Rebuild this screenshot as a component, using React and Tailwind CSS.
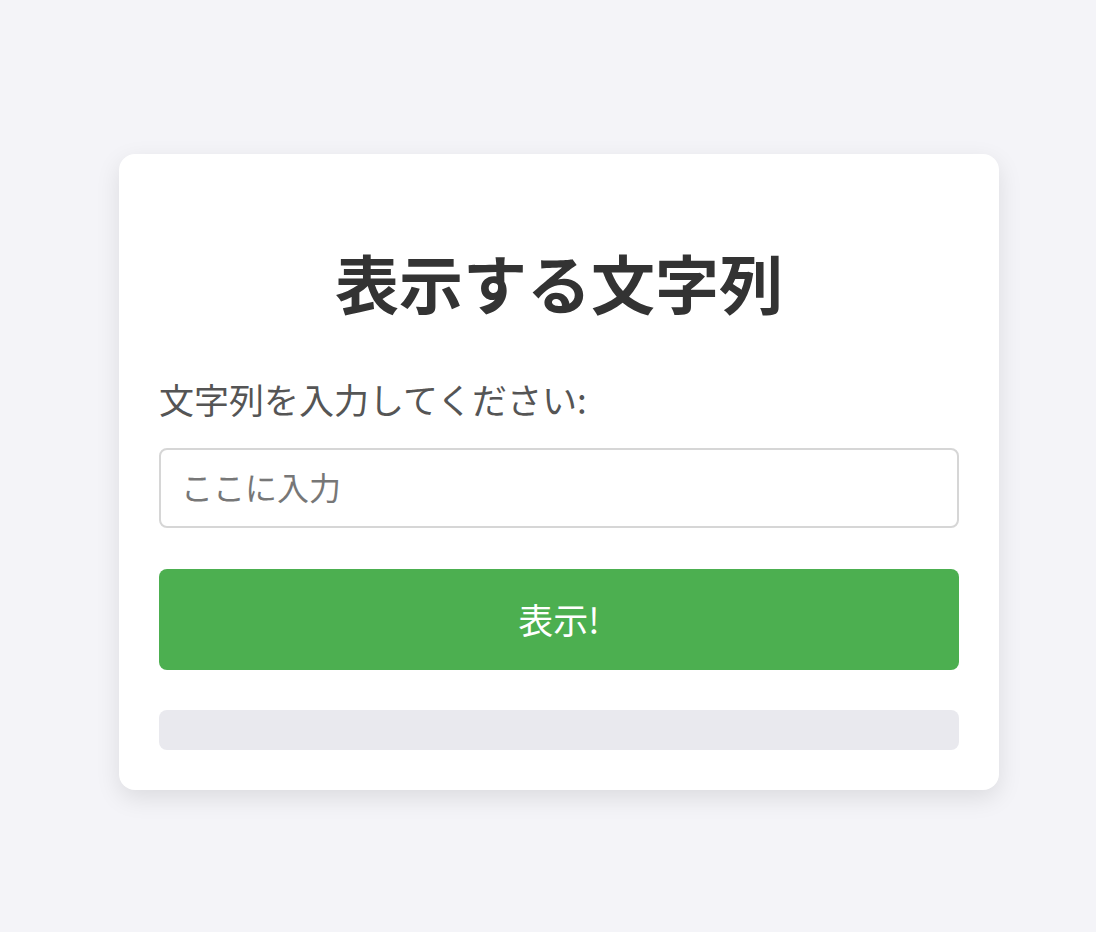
export default function App() {
    return (
        <div
            className="min-h-[932px] w-full bg-[#f4f4f8] pt-[154px] pl-[119px]"
            style={{ fontFamily: '"Noto Sans CJK JP", "Noto Sans", sans-serif' }}
        >
            <div className="w-[880px] rounded-[16px] bg-white px-[40px] pt-[87px] pb-[40px] shadow-[0_8px_24px_rgba(0,0,0,0.1)]">
                <h1 className="text-center text-[64px] font-bold leading-[80px] text-[#333]">表示する文字列</h1>

                <label className="mt-[58px] block text-[35px] leading-[40px] text-[#555]">文字列を入力してください:</label>

                <input
                    type="text"
                    placeholder="ここに入力"
                    className="mt-[29px] block h-[80px] w-full rounded-[8px] border-2 border-[#d6d6d6] px-[20px] pb-[4px] text-[32px] text-[#333] placeholder:text-[#777] outline-none"
                />

                <button className="mt-[41px] flex h-[101px] w-full items-center justify-center rounded-[8px] bg-[#4caf50] text-[35px] text-white">
                    表示!
                </button>

                <div className="mt-[40px] h-[40px] w-full rounded-[8px] bg-[#e9e9ee]" />
            </div>
        </div>
    );
}
